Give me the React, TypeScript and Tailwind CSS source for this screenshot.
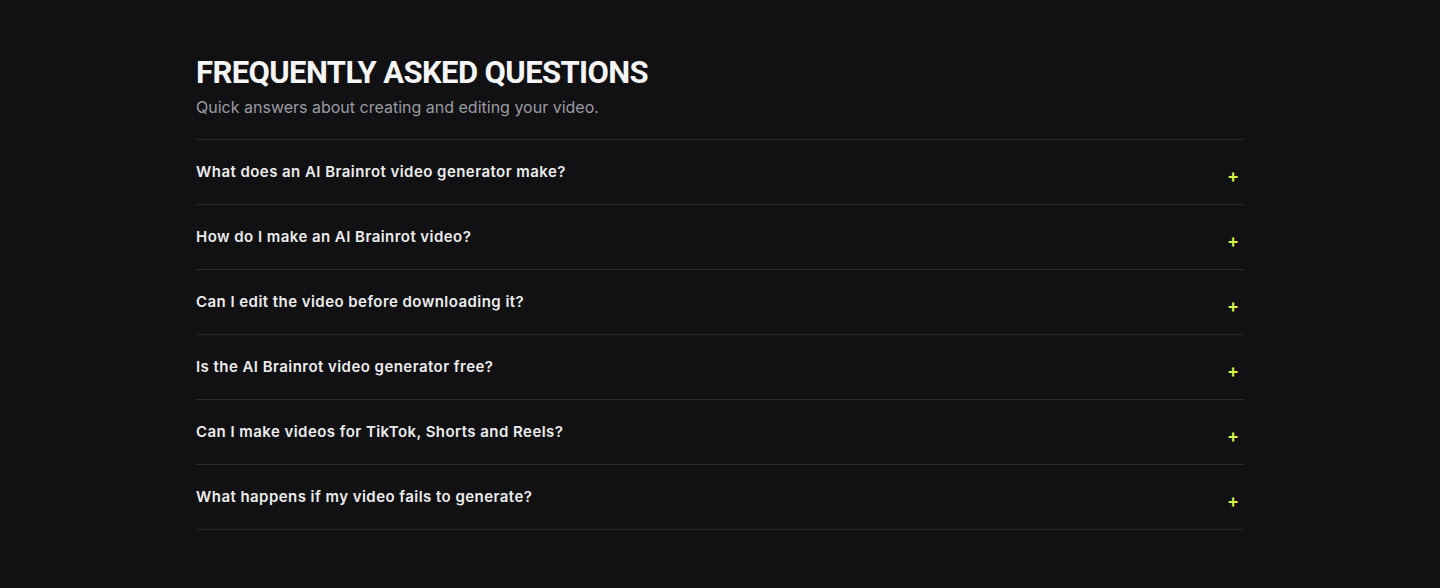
import React from "react";

const questions = [
  "What does an AI Brainrot video generator make?",
  "How do I make an AI Brainrot video?",
  "Can I edit the video before downloading it?",
  "Is the AI Brainrot video generator free?",
  "Can I make videos for TikTok, Shorts and Reels?",
  "What happens if my video fails to generate?",
];

export default function App() {
  return (
    <div className="min-h-[588px] w-full bg-[#111114] font-['Inter',sans-serif]">
      <div className="mx-auto max-w-[1048px] pt-[55px]">
        <h2 className="font-['Roboto',sans-serif] text-[31px] font-bold leading-[36px] tracking-[-0.6px] text-[#f5f5f5]">
          FREQUENTLY ASKED QUESTIONS
        </h2>
        <p className="mt-[4px] text-[16px] leading-[24px] text-[#9b9ba1]">
          Quick answers about creating and editing your video.
        </p>
        <div className="mt-[20px] border-t border-[#2a2a2e]">
          {questions.map((q) => (
            <div
              key={q}
              className="flex h-[65px] items-start justify-between border-b border-[#2a2a2e]"
            >
              <span className="pt-[21px] text-[15px] font-semibold leading-[22px] tracking-[0.45px] text-[#ececec]">
                {q}
              </span>
              <span className="pr-[5px] pt-[25px] text-[18px] font-semibold leading-[22px] text-[#d7f542]">
                +
              </span>
            </div>
          ))}
        </div>
      </div>
    </div>
  );
}
